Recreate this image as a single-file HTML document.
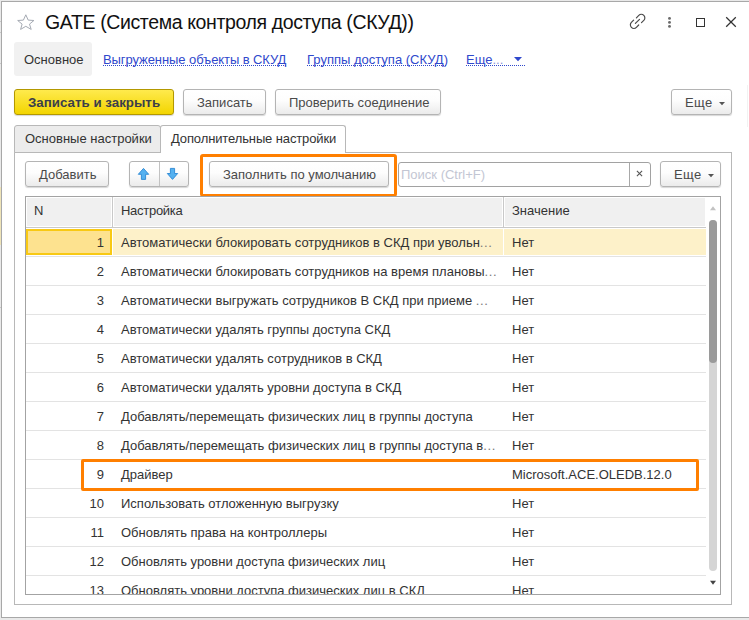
<!DOCTYPE html>
<html><head><meta charset="utf-8">
<style>
*{margin:0;padding:0;box-sizing:border-box}
html,body{width:749px;height:620px;overflow:hidden;background:#e9e9e9;font-family:"Liberation Sans",sans-serif;font-size:13px;color:#333}
.a{position:absolute}
.t{position:absolute;white-space:nowrap;line-height:16px;transform-origin:0 0}
.btn{position:absolute;border:1px solid #b4b4b4;border-radius:3px;background:linear-gradient(#ffffff 0%,#fdfdfd 45%,#ebebeb 100%);box-shadow:0 1px 1px rgba(0,0,0,0.16)}
</style></head><body>

<div class="a" style="left:1px;top:1px;width:748px;height:617px;background:#fff;border-left:1px solid #a8a8a8;border-top:1px solid #a8a8a8;border-bottom:1px solid #a8a8a8"></div>
<div class="a" style="left:0;top:187px;width:1px;height:58px;background:#efe4b8"></div>
<div class="a" style="left:0;top:21px;width:1px;height:1px;background:#c8c8c8"></div>
<div class="a" style="left:0;top:32px;width:1px;height:1px;background:#c8c8c8"></div>
<div class="a" style="left:0;top:63px;width:1px;height:1px;background:#c8c8c8"></div>
<div class="a" style="left:0;top:307px;width:1px;height:1px;background:#c8c8c8"></div>
<div class="a" style="left:747px;top:85px;width:1px;height:42px;background:#f2f2f2"></div>
<svg class="a" style="left:0;top:0" width="60" height="40" viewBox="0 0 60 40"><path d="M25.8 14.8 L28.2 20.1 L33.9 20.5 L29.5 24.1 L31.2 29.4 L25.8 26.3 L20.6 29.4 L22.1 24.1 L17.7 20.5 L23.4 20.1 Z" fill="none" stroke="#a5aab3" stroke-width="1" stroke-linejoin="miter"/></svg>
<div class="t" style="left:45px;top:11px;font-size:19.5px;color:#111;transform:scaleY(1.0);line-height:22px;letter-spacing:-0.38px">GATE (Система контроля доступа (СКУД))</div>
<svg class="a" style="left:0;top:0" width="660" height="40" viewBox="0 0 660 40"><g fill="none" stroke="#4a4a4a" stroke-width="1.2" stroke-linecap="round"><path d="M636.4 17.8 L638.8 15.4 A3.5 3.5 0 0 1 643.8 20.4 L641.5 22.7"/><path d="M633.6 20.1 L631.4 22.3 A3.5 3.5 0 0 0 636.4 27.3 L638.7 25"/><path d="M635.4 23.4 L639.5 19.3"/></g></svg>
<svg class="a" style="left:666px;top:16px" width="7" height="13" viewBox="0 0 7 13"><g fill="#6a6a6a"><circle cx="3.5" cy="2.4" r="1.45"/><circle cx="3.5" cy="6.4" r="1.45"/><circle cx="3.5" cy="10.4" r="1.45"/></g></svg>
<div class="a" style="left:696px;top:18px;width:9px;height:9px;border:1.5px solid #333"></div>
<svg class="a" style="left:725px;top:16px" width="12" height="12" viewBox="0 0 12 12"><path d="M1.2 1.2 L10.8 10.8 M10.8 1.2 L1.2 10.8" stroke="#333" stroke-width="1.25"/></svg>
<div class="a" style="left:14px;top:42px;width:78px;height:34px;background:#f1f1f1;border-radius:3px"></div>
<div class="t" style="left:24px;top:52px;font-size:13px;color:#333;transform:scaleY(1.0);">Основное</div>
<div class="t" style="left:103px;top:52px;font-size:13px;color:#2f48cc;transform:scaleY(1.0);letter-spacing:-0.08px">Выгруженные объекты в СКУД</div>
<div class="t" style="left:307px;top:52px;font-size:13px;color:#2f48cc;transform:scaleY(1.0);">Группы доступа (СКУД)</div>
<div class="t" style="left:466px;top:52px;font-size:13px;color:#2f48cc;transform:scaleY(1.0);">Еще<span style="color:#8d97dc">...</span></div>
<div class="a" style="left:103px;top:65px;width:183px;height:1px;background:repeating-linear-gradient(90deg,#2f48cc 0 1px,transparent 1px 2px)"></div>
<div class="a" style="left:307px;top:65px;width:140px;height:1px;background:repeating-linear-gradient(90deg,#2f48cc 0 1px,transparent 1px 2px)"></div>
<div class="a" style="left:466px;top:65px;width:59px;height:1px;background:repeating-linear-gradient(90deg,#2f48cc 0 1px,transparent 1px 2px)"></div>
<svg class="a" style="left:514px;top:57px" width="8" height="5" viewBox="0 0 8 5"><path d="M0 0 L8 0 L4 4.3 Z" fill="#2f48cc"/></svg>
<div class="btn" style="left:14px;top:89px;width:160px;height:26px;background:linear-gradient(#ffea4d,#f3d500);border-color:#b39800"></div>
<div class="t" style="left:28px;top:95px;font-size:13.33px;color:#3b3e4a;transform:scaleY(1.0);font-weight:bold">Записать и закрыть</div>
<div class="btn" style="left:183px;top:89px;width:83px;height:26px"></div>
<div class="t" style="left:197px;top:95px;font-size:13px;color:#4a4a4a;transform:scaleY(1.0);">Записать</div>
<div class="btn" style="left:275px;top:89px;width:166px;height:26px"></div>
<div class="t" style="left:289px;top:95px;font-size:13px;color:#4a4a4a;transform:scaleY(1.0);">Проверить соединение</div>
<div class="btn" style="left:671px;top:89px;width:61px;height:26px"></div>
<div class="t" style="left:685px;top:95px;font-size:13px;color:#4a4a4a;transform:scaleY(1.0);letter-spacing:0.4px">Еще</div>
<svg class="a" style="left:719px;top:102px" width="6" height="4" viewBox="0 0 6 4"><path d="M0 0 L6 0 L3 3.3 Z" fill="#555"/></svg>
<div class="a" style="left:14px;top:152px;width:718px;height:453px;border:1px solid #b8b8b8"></div>
<div class="a" style="left:14px;top:125px;width:147px;height:28px;background:#ececec;border:1px solid #b8b8b8;border-radius:3px 3px 0 0"></div>
<div class="t" style="left:25px;top:131px;font-size:13px;color:#333;transform:scaleY(1.0);">Основные настройки</div>
<div class="a" style="left:160px;top:125px;width:186px;height:28px;background:#fff;border:1px solid #b8b8b8;border-bottom:none;border-radius:3px 3px 0 0"></div>
<div class="t" style="left:171px;top:131px;font-size:13px;color:#333;transform:scaleY(1.0);letter-spacing:-0.12px">Дополнительные настройки</div>
<div class="btn" style="left:25px;top:161px;width:84px;height:26px"></div>
<div class="t" style="left:39px;top:167px;font-size:13px;color:#4a4a4a;transform:scaleY(1.0);">Добавить</div>
<div class="btn" style="left:129px;top:161px;width:60px;height:26px"></div>
<div class="a" style="left:159px;top:162px;width:1px;height:24px;background:#c2c2c2"></div>
<svg class="a" style="left:0;top:0" width="200" height="200" viewBox="0 0 200 200"><g fill="#55b1f0" stroke="#2a87d4" stroke-width="0.9" stroke-linejoin="miter"><path d="M143.5 168.4 L148.7 174.3 L145.6 174.3 L145.6 179.4 L141.4 179.4 L141.4 174.3 L138.3 174.3 Z"/><path d="M170.4 168.4 L174.6 168.4 L174.6 173.5 L177.7 173.5 L172.5 179.4 L167.3 173.5 L170.4 173.5 Z"/></g></svg>
<div class="btn" style="left:209px;top:161px;width:180px;height:26px"></div>
<div class="t" style="left:223px;top:167px;font-size:13px;color:#4a4a4a;transform:scaleY(1.0);">Заполнить по умолчанию</div>
<div class="a" style="left:200px;top:154px;width:197px;height:43px;border:3px solid #ff7f00;border-radius:3px"></div>
<div class="a" style="left:398px;top:162px;width:253px;height:25px;border:1px solid #a2a2a2;border-radius:3px;background:#fff"></div>
<div class="a" style="left:629px;top:163px;width:1px;height:23px;background:#a8a8a8"></div>
<div class="t" style="left:401px;top:167px;font-size:13px;color:#c3c6d3;transform:scaleY(1.0);">Поиск (Ctrl+F)</div>
<svg class="a" style="left:636px;top:170px" width="7" height="7" viewBox="0 0 7 7"><path d="M0.9 0.9 L6.1 6.1 M6.1 0.9 L0.9 6.1" stroke="#555" stroke-width="1.1"/></svg>
<div class="btn" style="left:660px;top:161px;width:61px;height:26px"></div>
<div class="t" style="left:674px;top:167px;font-size:13px;color:#4a4a4a;transform:scaleY(1.0);letter-spacing:0.4px">Еще</div>
<svg class="a" style="left:708px;top:174px" width="6" height="4" viewBox="0 0 6 4"><path d="M0 0 L6 0 L3 3.3 Z" fill="#555"/></svg>
<div class="a" style="left:25px;top:196px;width:696px;height:399px;border:1px solid #a3a3a3;background:#fff"></div>
<div class="a" style="left:27px;top:198px;width:678px;height:28px;background:#f0f0f0"></div>
<div class="a" style="left:111px;top:197px;width:3px;height:30px;background:#fff"></div>
<div class="a" style="left:112px;top:197px;width:1px;height:30px;background:#c9c9c9"></div>
<div class="a" style="left:502px;top:197px;width:3px;height:30px;background:#fff"></div>
<div class="a" style="left:503px;top:197px;width:1px;height:30px;background:#c9c9c9"></div>
<div class="a" style="left:26px;top:227px;width:680px;height:1px;background:#c9c9c9"></div>
<div class="t" style="left:34px;top:203px;font-size:13px;color:#333;transform:scaleY(1.0);">N</div>
<div class="t" style="left:121px;top:203px;font-size:13px;color:#333;transform:scaleY(1.0);letter-spacing:-0.28px">Настройка</div>
<div class="t" style="left:512px;top:203px;font-size:13px;color:#333;transform:scaleY(1.0);">Значение</div>
<div class="a" style="left:26px;top:228px;width:680px;height:366px;overflow:hidden">
<div class="a" style="left:87px;top:1px;width:390px;height:26px;background:#fdf1c9"></div>
<div class="a" style="left:478px;top:1px;width:202px;height:26px;background:#fdf1c9"></div>
<div class="a" style="left:0;top:1px;width:86px;height:26px;background:#fde28f;border:2px solid #f8c914"></div>
<div class="a" style="left:0;top:28px;width:680px;height:1px;background:#e3e3e3"></div>
<div class="t" style="left:0px;top:7px;font-size:13px;color:#333;transform:scaleY(1.0);width:78px;text-align:right">1</div>
<div class="t" style="left:95px;top:7px;font-size:13px;color:#333;transform:scaleY(1.0);">Автоматически блокировать сотрудников в СКД при увольн<span style="color:#7a7a7a;letter-spacing:0.6px">...</span></div>
<div class="t" style="left:486px;top:7px;font-size:13px;color:#333;transform:scaleY(1.0);">Нет</div>
<div class="a" style="left:0;top:57px;width:680px;height:1px;background:#e3e3e3"></div>
<div class="t" style="left:0px;top:36px;font-size:13px;color:#333;transform:scaleY(1.0);width:78px;text-align:right">2</div>
<div class="t" style="left:95px;top:36px;font-size:13px;color:#333;transform:scaleY(1.0);">Автоматически блокировать сотрудников на время плановы<span style="color:#7a7a7a;letter-spacing:0.6px">...</span></div>
<div class="t" style="left:486px;top:36px;font-size:13px;color:#333;transform:scaleY(1.0);">Нет</div>
<div class="a" style="left:0;top:86px;width:680px;height:1px;background:#e3e3e3"></div>
<div class="t" style="left:0px;top:65px;font-size:13px;color:#333;transform:scaleY(1.0);width:78px;text-align:right">3</div>
<div class="t" style="left:95px;top:65px;font-size:13px;color:#333;transform:scaleY(1.0);">Автоматически выгружать сотрудников В СКД при приеме <span style="color:#7a7a7a;letter-spacing:0.6px">...</span></div>
<div class="t" style="left:486px;top:65px;font-size:13px;color:#333;transform:scaleY(1.0);">Нет</div>
<div class="a" style="left:0;top:115px;width:680px;height:1px;background:#e3e3e3"></div>
<div class="t" style="left:0px;top:94px;font-size:13px;color:#333;transform:scaleY(1.0);width:78px;text-align:right">4</div>
<div class="t" style="left:95px;top:94px;font-size:13px;color:#333;transform:scaleY(1.0);">Автоматически удалять группы доступа СКД</div>
<div class="t" style="left:486px;top:94px;font-size:13px;color:#333;transform:scaleY(1.0);">Нет</div>
<div class="a" style="left:0;top:144px;width:680px;height:1px;background:#e3e3e3"></div>
<div class="t" style="left:0px;top:123px;font-size:13px;color:#333;transform:scaleY(1.0);width:78px;text-align:right">5</div>
<div class="t" style="left:95px;top:123px;font-size:13px;color:#333;transform:scaleY(1.0);">Автоматически удалять сотрудников в СКД</div>
<div class="t" style="left:486px;top:123px;font-size:13px;color:#333;transform:scaleY(1.0);">Нет</div>
<div class="a" style="left:0;top:173px;width:680px;height:1px;background:#e3e3e3"></div>
<div class="t" style="left:0px;top:152px;font-size:13px;color:#333;transform:scaleY(1.0);width:78px;text-align:right">6</div>
<div class="t" style="left:95px;top:152px;font-size:13px;color:#333;transform:scaleY(1.0);">Автоматически удалять уровни доступа в СКД</div>
<div class="t" style="left:486px;top:152px;font-size:13px;color:#333;transform:scaleY(1.0);">Нет</div>
<div class="a" style="left:0;top:202px;width:680px;height:1px;background:#e3e3e3"></div>
<div class="t" style="left:0px;top:181px;font-size:13px;color:#333;transform:scaleY(1.0);width:78px;text-align:right">7</div>
<div class="t" style="left:95px;top:181px;font-size:13px;color:#333;transform:scaleY(1.0);">Добавлять/перемещать физических лиц в группы доступа</div>
<div class="t" style="left:486px;top:181px;font-size:13px;color:#333;transform:scaleY(1.0);">Нет</div>
<div class="a" style="left:0;top:231px;width:680px;height:1px;background:#e3e3e3"></div>
<div class="t" style="left:0px;top:210px;font-size:13px;color:#333;transform:scaleY(1.0);width:78px;text-align:right">8</div>
<div class="t" style="left:95px;top:210px;font-size:13px;color:#333;transform:scaleY(1.0);">Добавлять/перемещать физических лиц в группы доступа в<span style="color:#7a7a7a;letter-spacing:0.6px">...</span></div>
<div class="t" style="left:486px;top:210px;font-size:13px;color:#333;transform:scaleY(1.0);">Нет</div>
<div class="a" style="left:0;top:260px;width:680px;height:1px;background:#e3e3e3"></div>
<div class="t" style="left:0px;top:239px;font-size:13px;color:#333;transform:scaleY(1.0);width:78px;text-align:right">9</div>
<div class="t" style="left:95px;top:239px;font-size:13px;color:#333;transform:scaleY(1.0);">Драйвер</div>
<div class="t" style="left:486px;top:239px;font-size:13px;color:#333;transform:scaleY(1.0);">Microsoft.ACE.OLEDB.12.0</div>
<div class="a" style="left:0;top:289px;width:680px;height:1px;background:#e3e3e3"></div>
<div class="t" style="left:0px;top:268px;font-size:13px;color:#333;transform:scaleY(1.0);width:78px;text-align:right">10</div>
<div class="t" style="left:95px;top:268px;font-size:13px;color:#333;transform:scaleY(1.0);">Использовать отложенную выгрузку</div>
<div class="t" style="left:486px;top:268px;font-size:13px;color:#333;transform:scaleY(1.0);">Нет</div>
<div class="a" style="left:0;top:318px;width:680px;height:1px;background:#e3e3e3"></div>
<div class="t" style="left:0px;top:297px;font-size:13px;color:#333;transform:scaleY(1.0);width:78px;text-align:right">11</div>
<div class="t" style="left:95px;top:297px;font-size:13px;color:#333;transform:scaleY(1.0);">Обновлять права на контроллеры</div>
<div class="t" style="left:486px;top:297px;font-size:13px;color:#333;transform:scaleY(1.0);">Нет</div>
<div class="a" style="left:0;top:347px;width:680px;height:1px;background:#e3e3e3"></div>
<div class="t" style="left:0px;top:326px;font-size:13px;color:#333;transform:scaleY(1.0);width:78px;text-align:right">12</div>
<div class="t" style="left:95px;top:326px;font-size:13px;color:#333;transform:scaleY(1.0);">Обновлять уровни доступа физических лиц</div>
<div class="t" style="left:486px;top:326px;font-size:13px;color:#333;transform:scaleY(1.0);">Нет</div>
<div class="a" style="left:0;top:376px;width:680px;height:1px;background:#e3e3e3"></div>
<div class="t" style="left:0px;top:355px;font-size:13px;color:#333;transform:scaleY(1.0);width:78px;text-align:right">13</div>
<div class="t" style="left:95px;top:355px;font-size:13px;color:#333;transform:scaleY(1.0);">Обновлять уровни доступа физических лиц в СКД</div>
<div class="t" style="left:486px;top:355px;font-size:13px;color:#333;transform:scaleY(1.0);">Нет</div>
</div>
<div class="a" style="left:81px;top:459px;width:618px;height:32px;border:3px solid #ff7f00;border-radius:2px"></div>
<svg class="a" style="left:709px;top:205px" width="8" height="6" viewBox="0 0 8 6"><path d="M1 5.2 L7 5.2 L4 1.2 Z" fill="#c2c2c2"/></svg>
<div class="a" style="left:709px;top:220px;width:8px;height:351px;background:#d5d5d5;border-radius:4px"></div>
<div class="a" style="left:709px;top:220px;width:8px;height:143px;background:#9a9a9a;border-radius:4px"></div>
<svg class="a" style="left:709px;top:580px" width="8" height="6" viewBox="0 0 8 6"><path d="M1 0.8 L7 0.8 L4 4.8 Z" fill="#444"/></svg>
</body></html>
